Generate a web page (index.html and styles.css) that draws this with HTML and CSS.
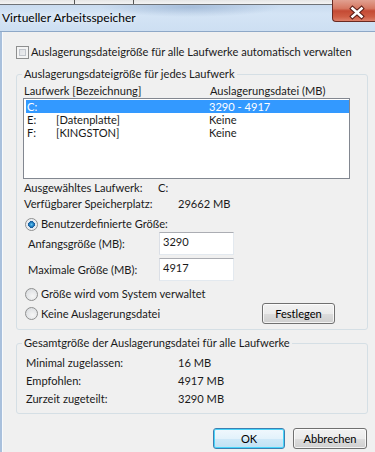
FILE: index.html
```html
<!DOCTYPE html>
<html lang="de">
<head>
<meta charset="utf-8">
<title>Virtueller Arbeitsspeicher</title>
<link rel="stylesheet" href="styles.css">
</head>
<body>
<div class="window">
  <div class="titlebar">
    <div class="title-left">
      <div class="peek"></div>
      <div class="title">Virtueller Arbeitsspeicher</div>
    </div>
    <div class="close">
      <svg width="43" height="22" viewBox="0 0 43 22">
        <path d="M20.5 8.5 L29.5 16.5 M29.5 8.5 L20.5 16.5" stroke="#5b1d16" stroke-width="4.6" stroke-linecap="square" fill="none"/>
        <path d="M20.5 8.5 L29.5 16.5 M29.5 8.5 L20.5 16.5" stroke="#ffffff" stroke-width="2.6" stroke-linecap="square" fill="none"/>
      </svg>
    </div>
  </div>
  <div class="client">
    <label class="check-row"><span class="checkbox"></span><span>Auslagerungsdateigröße für alle Laufwerke automatisch verwalten</span></label>

    <fieldset class="group group-drives">
      <legend>Auslagerungsdateigröße für jedes Laufwerk</legend>
      <div class="list-head"><span class="head-col">Laufwerk [Bezeichnung]</span><span>Auslagerungsdatei (MB)</span></div>
      <div class="listbox">
        <div class="row selected"><span class="c1">C:</span><span class="c2"></span><span>3290 - 4917</span></div>
        <div class="row"><span class="c1">E:</span><span class="c2">[Datenplatte]</span><span>Keine</span></div>
        <div class="row"><span class="c1">F:</span><span class="c2">[KINGSTON]</span><span>Keine</span></div>
      </div>
      <div class="info first"><span class="info-label w1">Ausgewähltes Laufwerk:</span><span>C:</span></div>
      <div class="info"><span class="info-label w2">Verfügbarer Speicherplatz:</span><span>29662 MB</span></div>
      <label class="radio-row r1"><span class="radio checked"></span><span>Benutzerdefinierte Größe:</span></label>
      <div class="field-row"><span class="field-label">Anfangsgröße (MB):</span><span class="edit">3290</span></div>
      <div class="field-row second"><span class="field-label">Maximale Größe (MB):</span><span class="edit">4917</span></div>
      <label class="radio-row r2"><span class="radio"></span><span>Größe wird vom System verwaltet</span></label>
      <div class="last-row">
        <label class="radio-row"><span class="radio"></span><span>Keine Auslagerungsdatei</span></label>
        <button class="btn btn-set">Festlegen</button>
      </div>
    </fieldset>

    <fieldset class="group group-total">
      <legend>Gesamtgröße der Auslagerungsdatei für alle Laufwerke</legend>
      <div class="total-row first"><span class="total-label">Minimal zugelassen:</span><span>16 MB</span></div>
      <div class="total-row"><span class="total-label">Empfohlen:</span><span>4917 MB</span></div>
      <div class="total-row"><span class="total-label">Zurzeit zugeteilt:</span><span>3290 MB</span></div>
    </fieldset>

    <div class="buttons">
      <button class="btn btn-ok">OK</button>
      <button class="btn btn-cancel">Abbrechen</button>
    </div>
  </div>
</div>
</body>
</html>
```

FILE: styles.css
```css
* { box-sizing: border-box; }
html, body { margin: 0; padding: 0; }
body {
  width: 375px;
  height: 452px;
  overflow: hidden;
  background: #f0f0f0;
  font-family: Lato, "Liberation Sans", sans-serif;
  font-size: 11.1px;
  color: #1a1a1a;
}
.window { display: flex; flex-direction: column; height: 452px; }

/* title bar */
.titlebar {
  display: flex;
  height: 32px;
  border-bottom: 1px solid #8ea8c7;
  background:
    radial-gradient(ellipse 90px 10px at 190px 7px, rgba(120,150,190,0.45), rgba(120,150,190,0) 100%),
    linear-gradient(#c3d6ec, #d4e4f5 45%, #cddff2);
}
.title-left { flex: 1; display: flex; flex-direction: column; min-width: 0; }
.peek {
  height: 5px;
  border-bottom: 1px solid #6f7378;
  background:
    linear-gradient(90deg, transparent 74px, #555 74px, #555 75px, transparent 75px, transparent 133px, #555 133px, #555 134px, transparent 134px),
    linear-gradient(#e6e6e6, #f4f4f4);
}
.title {
  flex: 1;
  display: flex;
  align-items: center;
  padding: 0 0 2px 2px;
  font-size: 12px;
  color: #000;
  text-shadow: 0 0 6px rgba(255,255,255,0.9);
}
.close {
  width: 43px;
  height: 22px;
  border: 1px solid #6a2a22;
  border-top: none;
  border-right: none;
  border-radius: 0 0 0 4px;
  background: linear-gradient(#e1a090, #d67862 40%, #c44a34 52%, #cf5e45 80%, #dd806a);
}
.close svg { display: block; margin-left: -1px; }

/* client */
.client {
  flex: 1;
  border-left: 2px solid #a9c0dc;
  box-shadow: inset 1px 0 0 #f8fafc;
  padding: 13px 7px 0 14px;
  display: flex;
  flex-direction: column;
}
.check-row { display: flex; align-items: center; gap: 2px; line-height: 14px; white-space: nowrap; }
.checkbox {
  width: 13px; height: 13px;
  border: 1px solid #8e8f8f;
  box-shadow: inset 0 0 0 2px #f4f4f4, inset 0 0 0 3px #c2c6cc;
  background: linear-gradient(135deg, #d8dbe0, #f4f4f4);
  flex: none;
}

/* groups */
.group {
  margin: 8px 0 0 0;
  padding: 0 0 5px 7px;
  border: 1px solid #d5dfe5;
  border-radius: 3px;
  min-width: 0;
}
.group legend {
  padding: 0 2px;
  margin-left: -2px;
  line-height: 14px;
}
.list-head { display: flex; margin-top: 3px; line-height: 14px; }
.head-col { width: 186px; }
.listbox {
  margin-left: -1px;
  width: 327px;
  height: 81px;
  border: 1px solid #828790;
  background: #fff;
  padding: 1px 0 0 2px;
}
.row { display: flex; height: 13px; line-height: 13px; padding-left: 1px; }
.row.selected { background: #3399ff; color: #fff; }
.c1 { width: 29px; }
.c2 { width: 153px; }

.info { display: flex; line-height: 16px; }
.info.first { margin-top: 1px; }
.w1 { width: 134px; }
.w2 { width: 154px; }

.radio-row { display: flex; align-items: center; gap: 3px; line-height: 16px; margin-left: 1px; }
.r1 { margin-top: 4px; }
.r2 { margin-top: 5px; }
.radio {
  width: 13px; height: 13px; flex: none;
  border-radius: 50%;
  border: 1px solid #8e8f8f;
  background: radial-gradient(circle at 60% 65%, #f6f6f6, #d4d7db);
}
.radio.checked {
  background: radial-gradient(circle at 50% 50%, #6cc6ee 0, #2a8fd0 1.6px, #1a5c9a 3.2px, #dfe6ee 3.6px, #f4f6f8 6px);
}

.field-row { display: flex; align-items: center; height: 23px; margin-left: 4px; }
.field-row.second { margin-top: 3px; }
.field-label { width: 131px; }
.edit {
  width: 75px; height: 23px;
  border: 1px solid #e3e9ef;
  border-top-color: #abadb3;
  border-left-color: #dbdfe6;
  background: #fff;
  padding: 2px 3px;
  line-height: 14px;
}

.last-row { display: flex; align-items: center; height: 21px; margin-top: 1px; }
.last-row .radio-row { flex: 1; }

.btn {
  font: inherit;
  color: #000;
  height: 21px;
  padding: 0;
  border: 1px solid #707070;
  border-radius: 3px;
  box-shadow: inset 0 0 0 1px rgba(255,255,255,0.75);
  background: linear-gradient(#f2f2f2, #ebebeb 50%, #dddddd 51%, #cfcfcf);
}
.btn-set { width: 73px; margin-right: 32px; }

.group-total { margin-top: 6px; }
.total-row { display: flex; line-height: 18px; margin-left: 2px; }
.total-row.first { margin-top: 4px; }
.total-label { width: 152px; }

.buttons { display: flex; justify-content: flex-end; gap: 8px; margin-top: 14px; padding-right: 1px; }
.btn-ok {
  width: 72px;
  border-color: #3c7fb1;
  box-shadow: inset 0 0 0 1px #48d5fb;
  background: linear-gradient(#f0f8fd, #e3f2fb 50%, #cfe9f8 51%, #bfe1f4);
}
.btn-cancel { width: 74px; }
```
